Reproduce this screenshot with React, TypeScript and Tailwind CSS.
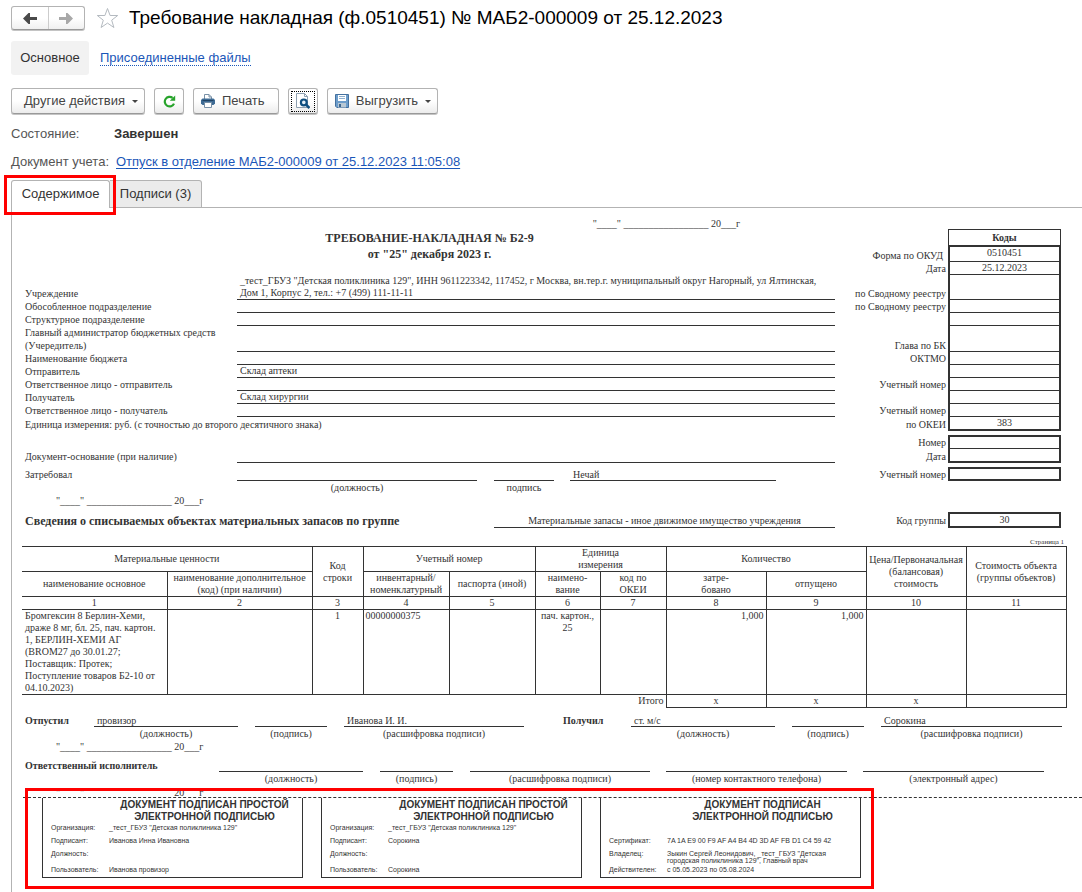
import React from "react";

const SANS = "font-['Liberation_Sans',Arial,sans-serif]";
const SERIF = "font-['Liberation_Serif','Times_New_Roman',serif]";

const DATE_BLANK = '"____" _________________ 20___г';

type FormRowProps = {
  label?: string;
  value?: string;
  codeLabel?: string;
  code?: string;
  rowClass?: string;
  valueClass?: string;
  codeClass?: string;
};

const FORM_GRID = "grid grid-cols-[213px_1fr_113px_113px]";

const FormRow: React.FC<FormRowProps> = ({
  label,
  value,
  codeLabel,
  code,
  rowClass = "h-[13px]",
  valueClass = "border-b border-[#333]",
  codeClass = "border-x-2 border-b border-[#333]",
}) => (
  <div className={`${FORM_GRID} ${rowClass}`}>
    <div className="flex items-end pl-px leading-[13px] whitespace-pre">
      {label}
    </div>
    <div className={`flex items-end pl-[3px] ${valueClass}`}>{value}</div>
    <div className="flex items-end justify-end pr-[2px] leading-[13px] whitespace-nowrap">
      {codeLabel}
    </div>
    <div className={`text-center ${codeClass}`}>{code}</div>
  </div>
);

type Slot = { text?: string; caption?: string; bold?: boolean; blank?: boolean };

// Line to be filled in by hand, with its caption underneath
const SlotCell: React.FC<Slot> = ({ text, caption, bold, blank }) => {
  if (blank) return <div />;
  if (bold)
    return (
      <div className="pl-px leading-[15px] font-bold whitespace-nowrap">
        {text}
      </div>
    );
  return (
    <div className="min-w-0">
      <div className="h-[14px] border-b border-[#333] pl-[3px] leading-[15px]">
        {text}
      </div>
      <div className="text-center leading-[14px] whitespace-nowrap">
        {caption}
      </div>
    </div>
  );
};

const issuedSlots: Slot[] = [
  { text: "Отпустил", bold: true },
  { text: "провизор", caption: "(должность)" },
  { blank: true },
  { caption: "(подпись)" },
  { blank: true },
  { text: "Иванова И. И.", caption: "(расшифровка подписи)" },
  { blank: true },
  { text: "Получил", bold: true },
  { text: "ст. м/с", caption: "(должность)" },
  { blank: true },
  { caption: "(подпись)" },
  { blank: true },
  { text: "Сорокина", caption: "(расшифровка подписи)" },
];

const executorSlots: Slot[] = [
  { text: "Ответственный исполнитель", bold: true },
  { caption: "(должность)" },
  { blank: true },
  { caption: "(подпись)" },
  { blank: true },
  { caption: "(расшифровка подписи)" },
  { blank: true },
  { caption: "(номер контактного телефона)" },
  { blank: true },
  { caption: "(электронный адрес)" },
];

const stamps = [
  {
    title: ["ДОКУМЕНТ ПОДПИСАН ПРОСТОЙ", "ЭЛЕКТРОННОЙ ПОДПИСЬЮ"],
    rows: [
      ["Организация:", '_тест_ГБУЗ "Детская поликлиника 129"'],
      ["Подписант:", "Иванова Инна Ивановна"],
      ["Должность:", ""],
      ["Пользователь:", "Иванова провизор"],
    ],
  },
  {
    title: ["ДОКУМЕНТ ПОДПИСАН ПРОСТОЙ", "ЭЛЕКТРОННОЙ ПОДПИСЬЮ"],
    rows: [
      ["Организация:", '_тест_ГБУЗ "Детская поликлиника 129"'],
      ["Подписант:", "Сорокина"],
      ["Должность:", ""],
      ["Пользователь:", "Сорокина"],
    ],
  },
  {
    title: ["ДОКУМЕНТ ПОДПИСАН", "ЭЛЕКТРОННОЙ ПОДПИСЬЮ"],
    rows: [
      ["", ""],
      ["Сертификат:", "7A 1A E9 00 F9 AF A4 B4 4D 3D AF FB D1 C4 59 42"],
      [
        "Владелец:",
        'Зыкин Сергей Леонидович, _тест_ГБУЗ "Детская городская поликлиника 129", Главный врач',
      ],
      ["Действителен:", "с 05.05.2023 по 05.08.2024"],
    ],
  },
];

const Caret = () => (
  <svg width="6" height="3" viewBox="0 0 6 3" aria-hidden="true">
    <path d="M0 0h6L3 3z" fill="#444" />
  </svg>
);

const BTN =
  "flex h-[26px] items-center rounded-[3px] border border-[#b3b3b3] border-b-[#999] bg-linear-to-b from-white from-50% to-[#ececec] text-[13px] text-[#444] shadow-[0_1px_0_#c4c4c4]";

const Toolbar: React.FC = () => (
  <div className="mt-[13px] flex gap-[9px]">
    <button className={`${BTN} w-[134px] justify-between pr-[6px] pl-3`}>
      Другие действия <Caret />
    </button>
    <button className={`${BTN} w-[30px] justify-center`} aria-label="Обновить">
      <svg width="13" height="13" viewBox="0 0 13 13" aria-hidden="true">
        <path
          d="M11 8.6A4.8 4.8 0 1 1 9.6 2.9"
          fill="none"
          stroke="#27a32b"
          strokeWidth="2.2"
        />
        <path d="M12.2 .4v5.4H6.8z" fill="#27a32b" />
      </svg>
    </button>
    <button className={`${BTN} w-[86px] gap-[7px] pl-[7px]`}>
      <svg width="14" height="14" viewBox="0 0 14 14" aria-hidden="true">
        <path d="M3.5 5V.5h4.5l2.5 2.5v2" fill="#fff" stroke="#7890a6" />
        <path d="M8 .5V3h2.5" fill="none" stroke="#7890a6" />
        <path d="M1.5 4.5h11L14 6v3.5L12.5 11h-11L0 9.5V6z" fill="#3e6b94" />
        <path d="M1.5 6.5h11" stroke="#1f4263" />
        <path d="M3.5 8.5h7v5h-7z" fill="#fff" stroke="#7890a6" />
      </svg>
      Печать
    </button>
    <button className={`${BTN} w-[30px] justify-center`} aria-label="Просмотр">
      <span className="flex h-[21px] w-6 shrink-0 items-center justify-center border border-dotted border-black">
        <svg width="14" height="16" viewBox="0 0 14 16" aria-hidden="true">
          <path d="M.5 .5h8l3 3v11H.5z" fill="#fff" stroke="#8d9fb0" />
          <path d="M8.5 .5v3h3" fill="none" stroke="#8d9fb0" />
          <circle
            cx="7.8"
            cy="9.4"
            r="2.9"
            fill="#e4eff7"
            stroke="#0f4f80"
            strokeWidth="2.2"
          />
          <path d="M9.8 11.4l3.6 3.6" stroke="#0f4f80" strokeWidth="2.6" />
        </svg>
      </span>
    </button>
    <button className={`${BTN} w-[111px] justify-between pr-[6px] pl-[7px]`}>
      <svg width="14" height="14" viewBox="0 0 14 14" aria-hidden="true">
        <path d="M.5 .5h13v13H1.8L.5 12.2z" fill="#6d9dcb" stroke="#44719f" />
        <path d="M3 1h8v6H3z" fill="#fff" />
        <path d="M4 2.5h6M4 4.5h6" stroke="#8fb0cf" />
        <path d="M3 9h8v4.5H3z" fill="#b9c8d4" />
        <path d="M4 10h2v3H4z" fill="#3d6790" />
      </svg>
      Выгрузить <Caret />
    </button>
  </div>
);

const Header: React.FC = () => (
  <header className="pl-[11px] text-[13px] text-[#333]">
    <div className="flex items-center pt-[5px]">
      <div className="flex h-6 w-[74px] rounded-[3px] border border-[#b3b3b3] border-b-[#999] bg-linear-to-b from-white from-50% to-[#f0f0f0] shadow-[0_1px_0_#c4c4c4]">
        <button
          className="flex flex-1 items-center justify-center border-r border-[#ccc]"
          aria-label="Назад"
        >
          <svg width="14" height="11" viewBox="0 0 14 11" aria-hidden="true">
            <path d="M0 5.5L5.5 0H7v4h7v3H7v4H5.5z" fill="#4a4a4a" />
          </svg>
        </button>
        <button
          className="flex flex-1 items-center justify-center"
          aria-label="Вперед"
        >
          <svg width="14" height="11" viewBox="0 0 14 11" aria-hidden="true">
            <path d="M14 5.5L8.5 0H7v4H0v3h7v4h1.5z" fill="#a8a8a8" />
          </svg>
        </button>
      </div>
      <button className="ml-[11px]" aria-label="В избранное">
        <svg width="23" height="22" viewBox="0 0 23 22" aria-hidden="true">
          <path
            d="M11.5 1.5l2.6 7h7.6l-6 4.7 2.2 7.3-6.4-4.4-6.4 4.4 2.2-7.3-6-4.7h7.6z"
            fill="#fff"
            stroke="#b4bac0"
          />
        </svg>
      </button>
      <h1 className="ml-[10px] text-[19px] leading-[26px] text-black">
        Требование накладная (ф.0510451) № МАБ2-000009 от 25.12.2023
      </h1>
    </div>
    <nav className="mt-[10px] flex items-center">
      <a
        href="#main"
        className="flex h-[34px] w-[78px] items-center justify-center rounded-[3px] bg-[#f2f2f2]"
      >
        Основное
      </a>
      <a
        href="#files"
        className="ml-[11px] border-b border-dotted border-[#1a56b8] leading-[14px] text-[#1a56b8]"
      >
        Присоединенные файлы
      </a>
    </nav>
    <Toolbar />
    <dl className="mt-[11px] leading-[18px]">
      <div className="flex">
        <dt className="w-[103px] text-[#555]">Состояние:</dt>
        <dd className="font-bold">Завершен</dd>
      </div>
      <div className="mt-[10px] flex">
        <dt className="w-[105px] text-[#555]">Документ учета:</dt>
        <dd>
          <a
            href="#doc"
            className="text-[#1a56b8] underline underline-offset-2"
          >
            Отпуск в отделение МАБ2-000009 от 25.12.2023 11:05:08
          </a>
        </dd>
      </div>
    </dl>
  </header>
);

const Tabs: React.FC = () => (
  <div className="relative mt-[9px] flex pl-[11px] text-[13px] text-[#333]">
    <button className="h-7 w-[99px] rounded-t-[3px] border border-b-0 border-[#b3b3b3] bg-white pb-[2px]">
      Содержимое
    </button>
    <button className="h-7 w-[92px] rounded-tr-[3px] border border-l-0 border-[#b3b3b3] bg-[#ebebeb] pb-[1px]">
      Подписи (3)
    </button>
    <div className="h-7 flex-1 border-b border-[#b3b3b3]" />
    <div className="pointer-events-none absolute -top-[5px] left-1 h-10 w-28 border-3 border-[#f00]" />
  </div>
);

const TH = "border border-[#333] p-0 font-normal";
const TD = "border border-[#333] p-0 align-top";

const MaterialsTable: React.FC = () => (
  <table className="w-full table-fixed border-collapse leading-[12px]">
    <colgroup>
      <col className="w-[145px]" />
      <col className="w-[145px]" />
      <col className="w-[51px]" />
      <col className="w-[86px]" />
      <col className="w-[86px]" />
      <col className="w-[65px]" />
      <col className="w-[66px]" />
      <col className="w-[100px]" />
      <col className="w-[100px]" />
      <col className="w-[100px]" />
      <col className="w-[100px]" />
    </colgroup>
    <thead>
      <tr className="h-[25px]">
        <th colSpan={2} className={`${TH} border-l-0`}>
          Материальные ценности
        </th>
        <th rowSpan={2} className={TH}>
          Код
          <br />
          строки
        </th>
        <th colSpan={2} className={TH}>
          Учетный номер
        </th>
        <th colSpan={2} className={TH}>
          Единица
          <br />
          измерения
        </th>
        <th colSpan={2} className={TH}>
          Количество
        </th>
        <th rowSpan={2} className={`${TH} whitespace-nowrap`}>
          Цена/Первоначальная
          <br />
          (балансовая)
          <br />
          стоимость
        </th>
        <th rowSpan={2} className={TH}>
          Стоимость объекта
          <br />
          (группы объектов)
        </th>
      </tr>
      <tr className="h-[25px]">
        <th className={`${TH} border-l-0`}>наименование основное</th>
        <th className={TH}>
          наименование дополнительное
          <br />
          (код) (при наличии)
        </th>
        <th className={TH}>
          инвентарный/
          <br />
          номенклатурный
        </th>
        <th className={TH}>паспорта (иной)</th>
        <th className={TH}>
          наимено-
          <br />
          вание
        </th>
        <th className={TH}>
          код по
          <br />
          ОКЕИ
        </th>
        <th className={TH}>
          затре-
          <br />
          бовано
        </th>
        <th className={TH}>отпущено</th>
      </tr>
      <tr className="h-[13px]">
        {[1, 2, 3, 4, 5, 6, 7, 8, 9, 10, 11].map((n) => (
          <th key={n} className={`${TH} first:border-l-0`}>
            {n}
          </th>
        ))}
      </tr>
    </thead>
    <tbody>
      <tr className="h-[85px]">
        <td className={`${TD} border-l-0 pl-[3px]`}>
          Бромгексин 8 Берлин-Хеми,
          <br />
          драже 8 мг, бл. 25, пач. картон.
          <br />
          1, БЕРЛИН-ХЕМИ АГ
          <br />
          (BROM27 до 30.01.27;
          <br />
          Поставщик: Протек;
          <br />
          Поступление товаров Б2-10 от
          <br />
          04.10.2023)
        </td>
        <td className={TD}></td>
        <td className={`${TD} text-center`}>1</td>
        <td className={`${TD} pl-[2px]`}>00000000375</td>
        <td className={TD}></td>
        <td className={`${TD} text-center`}>
          пач. картон.,
          <br />
          25
        </td>
        <td className={TD}></td>
        <td className={`${TD} pr-[2px] text-right`}>1,000</td>
        <td className={`${TD} pr-[2px] text-right`}>1,000</td>
        <td className={TD}></td>
        <td className={TD}></td>
      </tr>
      <tr className="h-[13px] text-center">
        <td colSpan={7} className="p-0 pr-[2px] text-right">
          Итого
        </td>
        <td className={TD}>х</td>
        <td className={TD}>х</td>
        <td className={TD}>х</td>
        <td className={TD}></td>
      </tr>
    </tbody>
  </table>
);

const Stamps: React.FC = () => (
  <div
    className={`flex gap-[18px] pl-[19px] text-[7px] leading-[7px] ${SANS}`}
  >
    {stamps.map((stamp, i) => (
      <section
        key={i}
        className="h-20 w-[261px] border border-t-0 border-[#333] pt-px pl-2"
      >
        <h2 className="pr-[2px] pl-[58px] text-center text-[10px] leading-[12px] font-bold whitespace-nowrap">
          {stamp.title[0]}
          <br />
          {stamp.title[1]}
        </h2>
        <dl className="grid grid-cols-[58px_1fr] grid-rows-[13px_13px_16px_13px] pt-px">
          {stamp.rows.map(([name, text]) => (
            <React.Fragment key={name}>
              <dt>{name}</dt>
              <dd className="pr-6">{text}</dd>
            </React.Fragment>
          ))}
        </dl>
      </section>
    ))}
  </div>
);

const DocumentSheet: React.FC = () => (
  <main
    className={`ml-[11px] border-l border-[#b3b3b3] pb-4 text-[10px] leading-[12px] text-[#333] ${SERIF}`}
  >
    <div className="pr-[21px] pl-3">
      <div className="grid grid-cols-[1fr_113px_113px]">
        <div className="pt-[10px]">
          <div className="pr-[95px] text-right">{DATE_BLANK}</div>
          <h2 className="text-center text-[12px] leading-[16px] font-bold">
            ТРЕБОВАНИЕ-НАКЛАДНАЯ № Б2-9
            <br />
            от "25" декабря 2023 г.
          </h2>
        </div>
        <div className="flex items-end justify-end pr-[5px] leading-[13px]">
          Форма по ОКУД
        </div>
        <div className="pt-[21px] text-center">
          <div className="h-4 border border-b-0 border-[#333] leading-[15px] font-bold">
            Коды
          </div>
          <div className="h-[17px] border-x-2 border-t-2 border-b border-[#333]">
            0510451
          </div>
        </div>
      </div>
      <FormRow codeLabel="Дата" code="25.12.2023" valueClass="" />
      <FormRow
        label="Учреждение"
        value='_тест_ГБУЗ "Детская поликлиника 129", ИНН 9611223342, 117452, г Москва, вн.тер.г. муниципальный округ Нагорный, ул Ялтинская, Дом 1, Корпус 2, тел.: +7 (499) 111-11-11'
        codeLabel="по Сводному реестру"
        rowClass="h-[25px]"
      />
      <FormRow
        label="Обособленное подразделение"
        codeLabel="по Сводному реестру"
      />
      <FormRow label="Структурное подразделение" />
      <FormRow
        label={"Главный администратор бюджетных средств\n(Учередитель)"}
        codeLabel="Глава по БК"
        rowClass="h-[26px]"
      />
      <FormRow label="Наименование бюджета" codeLabel="ОКТМО" />
      <FormRow label="Отправитель" value="Склад аптеки" />
      <FormRow
        label="Ответственное лицо - отправитель"
        codeLabel="Учетный номер"
      />
      <FormRow label="Получатель" value="Склад хирургии" />
      <FormRow
        label="Ответственное лицо - получатель"
        codeLabel="Учетный номер"
      />
      <FormRow
        label="Единица измерения: руб. (с точностью до второго десятичного знака)"
        codeLabel="по ОКЕИ"
        code="383"
        rowClass="h-[14px]"
        valueClass=""
        codeClass="border-x-2 border-b-2 border-[#333]"
      />
      <FormRow
        codeLabel="Номер"
        rowClass="mt-1 h-[14px]"
        valueClass=""
        codeClass="border-x-2 border-t-2 border-b border-[#333]"
      />
      <FormRow
        label="Документ-основание (при наличие)"
        codeLabel="Дата"
        rowClass="h-[14px]"
        codeClass="border-x-2 border-b-2 border-[#333]"
      />

      <div className="mt-1 grid grid-cols-[213px_240fr_17fr_60fr_16fr_206fr_59fr_113px_113px] grid-rows-[14px] leading-[15px]">
        <div className="pl-px">Затребовал</div>
        <div className="border-b border-[#333]" />
        <div />
        <div className="border-b border-[#333]" />
        <div />
        <div className="border-b border-[#333] pl-[3px]">Нечай</div>
        <div />
        <div className="pr-[2px] text-right">Учетный номер</div>
        <div className="border-2 border-[#333]" />
      </div>
      <div className="grid grid-cols-[213px_240fr_17fr_60fr_281fr_226px] text-center leading-[14px]">
        <div />
        <div>(должность)</div>
        <div />
        <div>подпись</div>
      </div>
      <div className="pl-8">{DATE_BLANK}</div>
      <div className="mt-[5px] grid grid-cols-[470fr_341fr_113px_113px] grid-rows-[16px] leading-[18px]">
        <div className="pl-px text-[12px] font-bold whitespace-nowrap">
          Сведения о списываемых объектах материальных запасов по группе
        </div>
        <div className="border-b border-[#333] text-center">
          Материальные запасы - иное движимое имущество учреждения
        </div>
        <div className="pr-[2px] text-right">Код группы</div>
        <div className="border-2 border-[#333] text-center leading-[12px]">
          30
        </div>
      </div>
    </div>

    <div className="pr-4 pl-[10px]">
      <div className="pt-[10px] pr-[2px] text-right text-[7px] leading-[8px]">
        Страница 1
      </div>
      <MaterialsTable />
    </div>

    <div className="relative">
      <div className="pr-5 pl-3">
        <div className="mt-[5px] grid grid-cols-[70fr_144fr_17fr_72fr_17fr_180fr_38fr_69fr_144fr_17fr_72fr_17fr_181fr]">
          {issuedSlots.map((slot, i) => (
            <SlotCell key={i} {...slot} />
          ))}
        </div>
        <div className="pl-8 leading-[12px]">{DATE_BLANK}</div>
        <div className="mt-[5px] grid grid-cols-[195fr_144fr_17fr_73fr_17fr_180fr_16fr_181fr_16fr_181fr_18fr]">
          {executorSlots.map((slot, i) => (
            <SlotCell key={i} {...slot} />
          ))}
        </div>
        <div className="h-[11px] overflow-hidden pl-8 leading-[13px]">
          {DATE_BLANK}
        </div>
      </div>
      <div className="ml-[11px] border-t border-dashed border-[#333]">
        <Stamps />
      </div>
      <div className="pointer-events-none absolute -bottom-[11px] left-[13px] h-[101px] w-[849px] border-3 border-[#f00]" />
    </div>
  </main>
);

const App: React.FC = () => (
  <div className={`bg-white ${SANS}`}>
    <Header />
    <Tabs />
    <DocumentSheet />
  </div>
);

export default App;
